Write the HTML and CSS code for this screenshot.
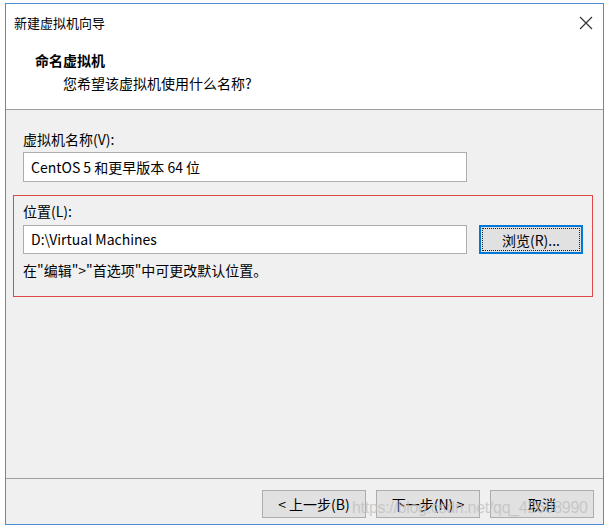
FILE: index.html
```html
<!DOCTYPE html>
<html lang="zh-CN">
<head>
    <meta charset="UTF-8">
    <title>新建虚拟机向导</title>
    <link rel="stylesheet" href="styles.css">
</head>
<body>
    <div class="window">
        <div class="header">
            <div class="titlebar">
                <span class="title">新建虚拟机向导</span>
                <svg class="close" width="14" height="14" viewBox="0 0 14 14">
                    <path d="M1 1 L13 13 M13 1 L1 13" stroke="#333" stroke-width="1.2" fill="none"/>
                </svg>
            </div>
            <div class="heading">命名虚拟机</div>
            <div class="subtitle">您希望该虚拟机使用什么名称?</div>
        </div>

        <div class="content">
            <div class="name-group">
                <div class="label">虚拟机名称(V):</div>
                <div class="field">CentOS 5 和更早版本 64 位</div>
            </div>

            <div class="location">
                <div class="label">位置(L):</div>
                <div class="row">
                    <div class="field">D:\Virtual Machines</div>
                    <button class="btn browse"><span class="focus">浏览(R)...</span></button>
                </div>
                <div class="hint">在"编辑"&gt;"首选项"中可更改默认位置。</div>
            </div>

            <div class="footer">
                <button class="btn">&lt; 上一步(B)</button>
                <button class="btn">下一步(N) &gt;</button>
                <button class="btn">取消</button>
            </div>
        </div>
    </div>
    <div class="watermark">https://blog.csdn.net/qq_42688990</div>
</body>
</html>
```

FILE: styles.css
```css
html, body {
    margin: 0;
    padding: 0;
    background: #fff;
}
body {
    font-family: "Noto Sans CJK SC", "Noto Sans", sans-serif;
    font-size: 14px;
    color: #000;
    position: relative;
    width: 605px;
    height: 530px;
    overflow: hidden;
}
.window {
    margin: 3px 0 0 5px;
    width: 599px;
    height: 522px;
    border: 1px solid #4a8fd6;
    box-sizing: border-box;
    display: flex;
    flex-direction: column;
}
.header {
    background: #fff;
    height: 106px;
    box-sizing: border-box;
    border-bottom: 1px solid #a0a0a0;
}
.titlebar {
    height: 38px;
    display: flex;
    align-items: center;
    justify-content: space-between;
    padding: 0 10px 0 8px;
}
.title {
    font-size: 13px;
    line-height: 20px;
}
.heading {
    margin: 8px 0 0 29px;
    font-weight: bold;
    line-height: 20px;
}
.subtitle {
    margin: 3px 0 0 57px;
    line-height: 20px;
}
.content {
    flex: 1;
    background: #f0f0f0;
    display: flex;
    flex-direction: column;
}
.name-group {
    padding: 19px 0 0 17px;
}
.label {
    line-height: 20px;
}
.field {
    width: 444px;
    height: 30px;
    box-sizing: border-box;
    background: #fff;
    border: 1px solid #adadad;
    padding: 0 7px;
    line-height: 28px;
    margin-top: 3px;
    white-space: nowrap;
}
.location {
    margin: 13px 0 0 7px;
    width: 580px;
    box-sizing: border-box;
    border: 1px solid #e0474c;
    padding: 5px 0 16px 9px;
}
.row {
    display: flex;
    align-items: flex-start;
    gap: 12px;
    margin-top: 4px;
}
.row .field {
    margin-top: 0;
    height: 29px;
    line-height: 27px;
}
.btn {
    font-family: inherit;
    font-size: 14px;
    color: #000;
    width: 104px;
    height: 28px;
    background: #e1e1e1;
    border: 1px solid #adadad;
    padding: 0;
    display: flex;
    align-items: center;
    justify-content: center;
}
.browse {
    height: 29px;
    border-color: #0078d7;
    box-shadow: inset 0 0 0 1px #0078d7;
    padding: 2px;
}
.focus {
    flex: 1;
    align-self: stretch;
    border: 1px dotted #222;
    display: flex;
    align-items: center;
    justify-content: center;
}
.hint {
    margin-top: 6px;
    line-height: 20px;
}
.footer {
    margin-top: auto;
    height: 46px;
    box-sizing: border-box;
    border-top: 1px solid #a0a0a0;
    display: flex;
    justify-content: flex-end;
    align-items: flex-start;
    gap: 10px;
    padding: 11px 9px 0 0;
}
.watermark {
    position: absolute;
    left: 352px;
    top: 499px;
    font-family: "Liberation Sans", Arial, sans-serif;
    font-size: 16px;
    color: rgba(190, 190, 190, 0.75);
    white-space: nowrap;
    letter-spacing: -0.3px;
}
```
